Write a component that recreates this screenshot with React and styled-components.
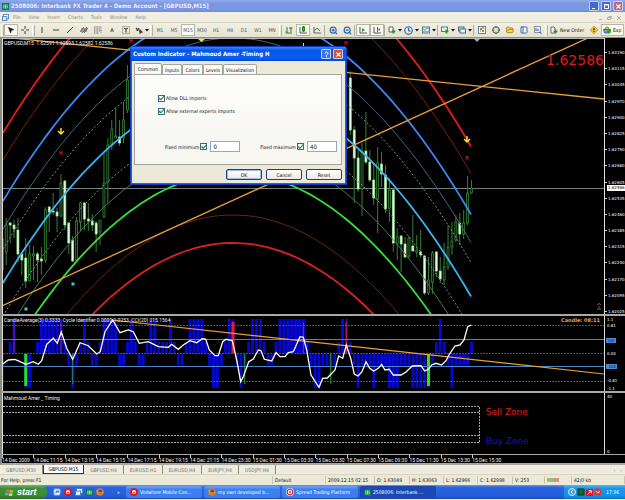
import React from "react";
import styled, { createGlobalStyle, css } from "styled-components";
import {
  ZoomIn, ZoomOut, Clock, Crosshair, MousePointer2, FolderOpen, PanelLeft,
} from "lucide-react";

const GlobalStyle = createGlobalStyle`
  * { box-sizing: border-box; }
  body { margin: 0; background: #ece9d8; font: 5px/6px "DejaVu Sans Condensed", "Liberation Sans", sans-serif; color: #111; }
  button, input { font: inherit; color: inherit; margin: 0; padding: 0; }
  svg { display: block; flex: none; }
`;

const Page = styled.div`
  display: flex;
  flex-direction: column;
  overflow: hidden;
  position: relative;
`;

/* ---------- window chrome ---------- */
const TitleBar = styled.header`
  display: flex;
  align-items: center;
  gap: 2px;
  height: 12px;
  padding: 0 2px;
  background: linear-gradient(#93abee, #7b96e0 30%, #7b97e2 80%, #6f8ad4);
  color: #e9effd;
`;
const TitleText = styled.h1`
  flex: 1;
  margin: 0;
  font-size: 6px;
  line-height: 12px;
  font-weight: bold;
  white-space: nowrap;
`;
const CaptionButton = styled.button`
  display: grid;
  place-items: center;
  width: 10px;
  height: 10px;
  border: 1px solid #c4d0f6;
  border-radius: 1px;
  background: ${(p) => (p.$close ? (p.$muted ? "#b96a80" : "#e0502c") : p.$muted ? "#4468d0" : "#3a74ee")};
  color: #fff;
`;
const MenuBar = styled.nav`
  display: flex;
  align-items: center;
  height: 11px;
  padding: 0 3px 0 2px;
  gap: 4px;
  background: #f0eee1;
  border-bottom: 1px solid #d6d2c2;
  color: #9a988c;
`;
const MenuList = styled.div`
  display: flex;
  flex: 1;
  gap: 8px;
`;
const MenuButton = styled.button`
  border: 0;
  background: none;
  color: #8a887c;
  line-height: 10px;
`;
const Toolbar = styled.div`
  display: flex;
  align-items: center;
  height: 15px;
  padding-left: 1px;
  overflow: hidden;
  background: linear-gradient(#f2f0e4, #e6e2d0);
  border-bottom: 1px solid #8e8c80;
`;
const Grip = styled.div`
  flex: none;
  width: 3px;
  height: 11px;
  border-left: 1px solid #fff;
  border-right: 1px solid #b4b09c;
`;
const Divider = styled.div`
  flex: none;
  width: 2px;
  height: 11px;
  border-left: 1px solid #b0ac9a;
`;
const Tool = styled.button`
  flex: none;
  display: flex;
  align-items: center;
  justify-content: center;
  gap: 2px;
  width: ${(p) => (p.$wide ? 17 : 14)}px;
  height: 12px;
  border: 1px solid ${(p) => (p.$pressed ? "#b9b5a4" : "transparent")};
  background: ${(p) => (p.$pressed ? "#faf9f4" : "none")};
  color: #55544e;
`;
const LabelTool = styled(Tool)`
  width: auto;
  padding: 0 2px 0 1px;
  color: #111;
  white-space: nowrap;
`;

/* ---------- charts ---------- */
const ChartWindow = styled.main`
  display: flex;
  flex-direction: column;
  background: #000;
  border-left: 2px solid #8b8a80;
  border-bottom: 2px solid #a8a69c;
  color: #f0f0f0;
`;
const Pane = styled.section`
  display: flex;
  height: ${(p) => p.$height}px;
  border-bottom: ${(p) => (p.$last ? 1 : 2)}px solid #a9a9a6;
`;
const Plot = styled.div`
  position: relative;
  flex: 1;
  min-width: 0;
  border-left: 1px solid #ddd;
  border-right: 1px solid #ddd;
  ${(p) => p.$top && css`border-top: 1px solid #bbb;`}
`;
const Drawing = styled.svg`
  width: 100%;
  height: 100%;
`;
const PaneLabel = styled.div`
  position: absolute;
  left: 1px;
  top: ${(p) => p.$top || 1}px;
  font-family: Roboto, sans-serif;
  white-space: pre;
`;
const BigPrice = styled.div`
  position: absolute;
  right: 0;
  top: 13px;
  font: 14px/16px "DejaVu Sans", sans-serif;
  color: #e01818;
`;
const CandleTimer = styled.div`
  position: absolute;
  right: 4px;
  top: 1px;
  font: bold 5px/7px "DejaVu Sans", sans-serif;
  color: #f0a040;
`;
const Zone = styled.div`
  position: absolute;
  left: 80%;
  top: ${(p) => p.$top}px;
  padding-left: 2px;
  font: 9px/10px "DejaVu Sans", sans-serif;
  color: ${(p) => p.$color};
`;
const Scale = styled.div`
  position: relative;
  display: flex;
  flex-direction: column;
  justify-content: ${(p) => (p.$spread ? "space-between" : "flex-start")};
  width: 20px;
  padding: ${(p) => p.$pad || "0"};
  font: 4px/5px "DejaVu Sans", sans-serif;
  color: #fff;
`;
const PriceTick = styled.span`
  padding-left: 3px;
  position: relative;
  &::before {
    content: "";
    position: absolute;
    left: 0;
    top: 2px;
    width: 2px;
    height: 1px;
    background: #ccc;
  }
`;
const LastPrice = styled.span`
  position: absolute;
  right: 0;
  top: 147px;
  width: 18px;
  padding-left: 1px;
  background: #fff;
  color: #000;
  line-height: 6px;
`;
const LevelTick = styled.span`
  align-self: flex-start;
  margin-top: ${(p) => p.$gap || 0}px;
  margin-left: 1px;
  padding: 0 1px;
  background: ${(p) => (p.$mark ? "#4a8ad4" : "none")};
  color: ${(p) => (p.$mark ? "#0a1a50" : "#fff")};
`;
const TimeAxis = styled.div`
  display: flex;
  height: 8px;
  margin-right: 20px;
`;
const TimeTick = styled.span`
  flex: none;
  width: 5.2%;
  padding-top: 2px;
  font-family: Roboto, sans-serif;
  line-height: 6px;
  white-space: nowrap;
  background: linear-gradient(#ccc, #ccc) no-repeat 0 0 / 1px 3px;
`;

/* ---------- dialog ---------- */
const Dialog = styled.section`
  position: absolute;
  left: 130px;
  top: 46px;
  width: 217px;
  padding: 0 4px 4px 3px;
  background: #ece9d8;
  border: 1px solid #0a3cc8;
  box-shadow: inset 0 0 0 1px #2460ea;
  border-radius: 3px 3px 0 0;
`;
const DialogTitle = styled.div`
  display: flex;
  align-items: center;
  gap: 2px;
  height: 14px;
  margin: 0 -4px 2px -3px;
  padding: 0 3px 0 2px;
  border-radius: 2px 2px 0 0;
  background: linear-gradient(#3a86f8, #0656e4 25%, #0560f2 80%, #0444c4);
  color: #fff;
`;
const Tabs = styled.div`
  display: flex;
  align-items: flex-end;
  height: 11px;
`;
const Tab = styled.button`
  height: ${(p) => (p.$active ? 11 : 10)}px;
  width: ${(p) => p.$width}px;
  border: 1px solid #a3a79c;
  border-top-color: ${(p) => (p.$active ? "#e68b2c" : "#a3a79c")};
  border-bottom: 0;
  border-radius: 2px 2px 0 0;
  background: #fbfaf6;
  line-height: 8px;
  white-space: nowrap;
`;
const TabPanel = styled.div`
  display: flex;
  flex-direction: column;
  height: 91px;
  padding: 19px 4px 0 23px;
  border: 1px solid #a3a79c;
  background: linear-gradient(#fdfdfb, #f6f5ef);
`;
const CheckRow = styled.label`
  display: flex;
  align-items: center;
  gap: 1px;
  height: 8px;
  margin-bottom: 5px;
`;
const Check = styled.input.attrs({ type: "checkbox" })`
  appearance: none;
  display: grid;
  place-items: center;
  flex: none;
  width: 7px;
  height: 7px;
  border: 1px solid #3c6a8a;
  background: #fff;
  &:checked::before {
    content: "";
    width: 5px;
    height: 5px;
    background: #1f9a28;
    clip-path: polygon(0 40%, 40% 65%, 100% 0, 100% 35%, 40% 100%, 0 75%);
  }
`;
const LimitRow = styled.div`
  display: flex;
  justify-content: space-between;
  margin-top: 21px;
  padding-left: 7px;
`;
const Limit = styled.div`
  display: flex;
  align-items: center;
  gap: 3px;
`;
const LimitLabel = styled.label`
  display: flex;
  align-items: center;
  gap: 1px;
`;
const TextBox = styled.input`
  width: 30px;
  height: 11px;
  padding-left: 2px;
  border: 1px solid #8fabc6;
  background: #fff;
  font-size: 6px;
`;
const DialogButtons = styled.div`
  display: flex;
  justify-content: flex-end;
  gap: 4px;
  padding: 4px 0 0;
`;
const PushButton = styled.button`
  width: 36px;
  height: 11px;
  border: 1px solid #1c4078;
  border-radius: 2px;
  background: linear-gradient(#fff, #ece9e0);
  line-height: 8px;
  ${(p) => p.$primary && css`box-shadow: inset 0 0 0 1px #9dbcf0;`}
`;

/* ---------- bottom bars ---------- */
const SheetTabs = styled.nav`
  display: flex;
  height: 9px;
  background: #efecdf;
`;
const SheetTab = styled.button`
  width: ${(p) => p.$width}px;
  border: 0;
  border-right: 1px solid #8a887c;
  background: ${(p) => (p.$active ? "#fff" : "none")};
  color: ${(p) => (p.$active ? "#000" : "#77756b")};
  line-height: 8px;
  ${(p) => p.$active && css`border: 1px solid #333; border-top: 0;`}
`;
const Scrollers = styled.div`
  display: flex;
  align-items: center;
  gap: 5px;
  margin-left: auto;
  padding-right: 3px;
  color: #777;
`;
const StatusBar = styled.footer`
  display: flex;
  align-items: center;
  height: 11px;
  background: #ece9d8;
  border-top: 1px solid #d8d4c4;
`;
const StatusCell = styled.span`
  ${(p) => (p.$width ? css`flex: none; width: ${p.$width}px;` : css`flex: 1;`)}
  height: 8px;
  padding-left: ${(p) => p.$inset || 2}px;
  line-height: 8px;
  border-right: 1px solid #c8c4b2;
  white-space: nowrap;
`;
const TaskBar = styled.div`
  display: flex;
  align-items: stretch;
  height: 14px;
  background: linear-gradient(#5a96f4, #2b64de 18%, #245cdc 80%, #1c48b0);
  color: #fff;
`;
const StartButton = styled.button`
  display: flex;
  align-items: center;
  gap: 3px;
  width: 47px;
  padding-left: 5px;
  border: 0;
  border-radius: 0 6px 6px 0;
  background: linear-gradient(#6cb468, #3a9038 25%, #388c34 75%, #2a6c2a);
  color: #fff;
  font: italic bold 9px/12px "Liberation Sans", sans-serif;
`;
const QuickLaunch = styled.div`
  display: flex;
  align-items: center;
  gap: 3px;
  width: 79px;
  padding-left: 6px;
`;
const Overflow = styled.span`
  padding-left: 10px;
`;
const TaskButton = styled.button`
  display: flex;
  align-items: center;
  gap: 2px;
  width: 76px;
  margin: 1px 2px 1px 0;
  padding-left: 4px;
  border: 0;
  border-radius: 2px;
  background: ${(p) => (p.$active ? "#1c48b4" : "linear-gradient(#6aa4fa, #3c80f0 30%, #3a7cec)")};
  color: #fff;
  white-space: nowrap;
`;
const Tray = styled.div`
  display: flex;
  align-items: center;
  gap: 1px;
  margin-left: auto;
  padding: 0 6px 0 4px;
  background: linear-gradient(#4cb8f6, #1896ec 25%, #1490e8 80%, #1070c0);
`;
const ClockText = styled.time`
  padding-left: 3px;
`;

/* ---------- small drawings ---------- */
const Ic = ({ children, size = 8 }) => (
  <svg width={size} height={size} viewBox="0 0 8 8" fill="none" stroke="#44433e" strokeWidth="1">{children}</svg>
);
const Caret = () => (
  <svg width="4" height="3" viewBox="0 0 4 3"><path d="M0 0h4L2 2.5z" fill="#111" /></svg>
);
const Plus = () => <path d="M5.5 3.5v4M3.5 5.5h4" stroke="#18a818" strokeWidth="1.7" />;
const icons = {
  vline: <path d="M4 1v6" />,
  hline: <path d="M1 4h6" />,
  diag: <path d="M1 7l6-6" />,
  channel: <path d="M0 6l4-5M2 7l5-6M4 7l4-5M1 3h6M1 5h6" strokeWidth=".8" />,
  fib: <path d="M0 1h8M0 3h8M0 5h6M0 7h5M7 4v3" strokeDasharray="1 .6" strokeWidth=".8" />,
  arrows: <path d="M1 2l2 2 1-2M2 3v2M4 5l3 1M5 4v3l2-1z" strokeWidth="1.2" />,
  bars: <path d="M2 1v6M2 6H.5M6 1v5M6 2h1.5M4 2H6M1 7h6" stroke="#3a7a3a" />,
  candles: <><path d="M1 1v6h7" stroke="#555" /><path d="M4.5 0v6" stroke="#189018" /><rect x="3.5" y="1" width="2" height="4" fill="#24c024" stroke="#189018" /></>,
  line: <><path d="M1 1v6h7" stroke="#666" /><path d="M1 5l3-3 3 3" stroke="#2a8a2a" /></>,
  scroll: <><path d="M1 1v6h7" stroke="#555" /><path d="M3 2v4l3-2z" fill="#28a028" stroke="none" /></>,
  shift: <><path d="M1 1v6h7M4.5 1v5" stroke="#555" /><path d="M7 2v3L5 3.5z" fill="#b04848" stroke="none" /></>,
  indicator: <><path d="M1 1h4v5H1z" fill="#fff" stroke="#666" /><Plus /></>,
  template: <><rect x=".5" y="1" width="7" height="6" fill="#d8ecf8" stroke="#587890" /><path d="M1 3l2 1 2-2 2 1M1 6l2-1 2 1 2-1" stroke="#4a8a6a" strokeWidth=".7" /></>,
  newChart: <><rect x=".5" y="1" width="6" height="4.5" fill="#e8f4fc" stroke="#587890" /><Plus /></>,
  profiles: <><rect x=".5" y="1" width="5.5" height="4" fill="#cfe2f6" stroke="#486890" /><rect x="2" y="3" width="5.5" height="4" fill="#eef6ff" stroke="#486890" /></>,
  watch: <><rect x=".5" y=".5" width="7" height="7" fill="#fff" stroke="#68809a" /><path d="M2 3h2M4 5h2" stroke="#d03030" strokeWidth="1.3" /><path d="M4 2h2M2 5h1" stroke="#28a028" /></>,
  tester: <><rect x=".5" y=".5" width="6" height="6" fill="#e4eefa" stroke="#8898a8" /><path d="M2 5V2M4 5V3M5 6l2.5 1.5" stroke="#2a60b8" /></>,
  order: <><path d="M1 1h3l1 1v5H1z" fill="#fff" stroke="#666" /><Plus /></>,
  alert: <><path d="M4 0l4 4-4 4-4-4z" fill="#f4c430" stroke="#a88010" strokeWidth=".5" /><path d="M4 2v2.5M4 5.2v.8" stroke="#111" /></>,
  expert: <><path d="M.5 3.500h7l-1 3.500h-5z" fill="#58a8d8" stroke="#386890" /><path d="M2 3a2 2 0 014 0" fill="#f4d050" stroke="#a08020" /><circle cx="6" cy="5.500" r="2" fill="#22b022" stroke="none" /></>,
  app: <><rect x="1.500" y=".5" width="6" height="5" fill="#fff" stroke="#4480c8" /><rect x=".5" y="3" width="5" height="4.500" fill="#d8ecff" stroke="#4480c8" /></>,
  green: <><rect x=".5" y=".5" width="7" height="7" fill="#2fa070" stroke="#157050" /><path d="M2 5V3M4 6V2M6 5V3" stroke="#a0f0c0" /></>,
  vodafone: <><circle cx="4" cy="4" r="4" fill="#e01818" stroke="none" /><circle cx="4" cy="4" r="2" fill="#fff" stroke="none" /><circle cx="4" cy="4.500" r=".9" fill="#e01818" stroke="none" /></>,
  fox: <><circle cx="4" cy="4" r="3.800" fill="#e87818" stroke="none" /><circle cx="4.300" cy="3.400" r="2" fill="#3058b0" stroke="none" /><path d="M1 2c0 3 3 4 6 2" stroke="#f8a830" /></>,
  page: <><rect x="1" y="1" width="6" height="6" rx="1" fill="#eaf4ff" stroke="#90b8e8" /><path d="M3 5a1.500 1.500 0 113-1H3" stroke="#2870c0" /></>,
  target: <><circle cx="4" cy="4" r="3.900" fill="#fff" stroke="none" /><circle cx="4" cy="4" r="2.800" stroke="#d01830" strokeWidth="1.200" /><circle cx="4" cy="4" r="1" fill="#d01830" stroke="none" /></>,
  chev: <><circle cx="4" cy="4" r="3.500" fill="#3a98f0" stroke="#d8ecff" /><path d="M5 2L3 4l2 2" stroke="#fff" /></>,
  net: <rect x="1" y="1" width="6" height="6" fill="#107028" stroke="#083818" />,
  redBox: <><rect x="0" y="0" width="8" height="8" fill="#d81828" stroke="none" /><path d="M2 6l4-4M3 2h3v3" stroke="#fff" /></>,
  redBall: <><circle cx="4" cy="4" r="3.800" fill="#e03838" stroke="none" /><path d="M2 3l2 2 2-2" stroke="#fff" /></>,
};
const Glyph = ({ n, size }) => <Ic size={size}>{icons[n]}</Ic>;
const WindowsFlag = () => (
  <svg width="9" height="9" viewBox="0 0 9 9">
    <path d="M1 1.5q2-1 3.400 0L3.800 4Q2 3.200.4 4z" fill="#f06038" />
    <path d="M5 1.800q1.600 1 3.600 0L8 4.300q-2 1-3.600 0z" fill="#80d040" />
    <path d="M.2 4.800q2-.8 3.400 0L3 7.500q-1.600-.9-3.400 0z" fill="#60a0f8" />
    <path d="M4.200 5q1.600 1 3.600 0L7.200 7.600q-2 1-3.600 0z" fill="#f8d038" />
  </svg>
);
const CapIcon = ({ kind }) => (
  <svg width="7" height="7" viewBox="0 0 7 7" fill="none" stroke="#fff">
    {kind === "min" && <path d="M1 5.500h3" />}
    {kind === "max" && <path d="M1.500 1.500h4v4h-4zM1 2h5" />}
    {kind === "close" && <path d="M1.500 1.500l4 4M5.500 1.500l-4 4" strokeWidth="1.200" />}
    {kind === "help" && <path d="M2 2.500C2 .5 5 .5 5 2.300 5 3.500 3.500 3.200 3.500 4.700M3.500 5.300v1" />}
  </svg>
);

/* ---------- data ---------- */
const barX = (k) => 2.3 + 3.91 * k;

// index, high, low, body top, body bottom, falling
const candles = [
  [0,238,271,239,270,0],[1,218,265,225,252,0],[2,222,243,223,225,1],[3,220,238,225,229,1],[4,218,262,230,254,1],
  [5,252,275,254,260,1],[6,238,288,258,281,1],[7,245,281,254,281,0],[8,246,280,254,256,0],[9,252,282,254,260,1],
  [10,247,275,259,261,1],[11,207,263,210,260,0],[12,206,232,207,212,1],[13,193,215,211,212,1],[14,208,232,212,216,1],
  [15,174,217,183,216,0],[16,180,230,181,225,1],[17,222,254,223,243,1],[18,236,262,240,261,1],[19,217,263,221,260,0],
  [20,202,231,203,222,0],[21,202,230,203,219,1],[22,203,231,219,221,1],[23,214,231,221,225,1],[24,221,252,223,234,1],
  [25,220,245,220,232,0],[26,152,218,183,217,0],[27,138,203,145,182,0],[28,120,150,129,144,0],[29,108,138,136,138,0],
  [30,120,146,137,143,1],[31,102,143,120,138,0],[32,65,113,80,110,0],
  [89,71,135,78,130,1],[90,126,203,130,158,1],[91,150,192,158,189,1],[92,143,216,152,189,0],[93,112,164,151,162,1],
  [94,150,182,162,180,1],[95,163,205,180,198,1],[96,147,233,163,199,0],[97,152,187,164,174,1],[98,165,213,175,209,1],
  [99,178,222,190,208,0],[100,188,252,190,243,1],[101,228,260,237,244,0],[102,235,272,236,244,1],[103,237,258,244,257,1],
  [104,236,258,238,256,0],[105,215,251,246,251,1],[106,235,257,250,252,0],[107,230,258,252,255,1],[108,255,295,256,293,1],
  [109,257,295,280,293,0],[110,251,294,253,282,0],[111,251,277,252,271,1],[112,257,283,271,279,1],[113,243,285,267,280,0],
  [114,225,270,247,267,0],[115,222,255,241,247,0],[116,215,242,222,240,0],[117,213,245,223,234,1],[118,210,239,223,234,0],
  [119,176,225,193,223,0],[120,180,194,188,193,0],
];

// apex height, colour, thickness, dash
const arcs = [
  [-58, "#e81c1c", 1.8], [-31, "#7c1c18", 1], [10, "#3a88f0", 1.8], [38, "#3c6a78", 1],
  [58, "#6a9a90", 1, "2 2"], [92, "#3cb4f0", 1.8], [125, "#6a9a88", 1, "2 2"], [147, "#3c7a58", 1],
  [173, "#38dc38", 1.8], [215, "#6c2020", 1], [243, "#e02020", 1.8],
];
const arcPath = (top) => {
  const pts = [];
  for (let x = 3; x <= 471; x += 6) pts.push(`${x},${(top + 0.00361 * (x - 233) ** 2).toFixed(1)}`);
  return pts.join(" ");
};

// U/D long bar above/below zero, u/d short bar, dot for none; ten bars a group
const cycle = [
  "D.uU..DD.u", "UUUUUUudDd", "uUudduUUUU", "dduUudduUU", "uuuUudduUU",
  "UUudDDduUU", "dDduUUUudd", "uUUUUUUUud", "DDdddduUUu", "dDdddDdddD",
  "DDdddDDDDD", "duUudDdddd", "u",
].join("");
const barLevels = { U: [319, 34], u: [342, 11], d: [354, 11], D: [354, 34] };
// bar index, top, height, width, colour
const accents = [
  [6, 354, 32, 3, "#20e820"], [59, 322, 31, 3, "#f01818"], [109, 354, 32, 3, "#20e820"],
  [3, 322, 31, 1, "#8a2080"], [15, 322, 31, 1, "#8a2080"], [18, 354, 30, 1, "#208870"],
  [62, 354, 30, 1, "#20a028"], [77, 322, 31, 1, "#c01860"], [84, 354, 30, 1, "#20a028"], [88, 322, 31, 1, "#c01860"],
];

const oscillator = [
  [7,163],[25,150],[45,148],[60,155],[78,163],[100,155],[115,163],[125,152],[140,103],[160,85],[172,100],[184,66],[200,115],
  [218,148],[240,98],[265,107],[290,132],[301,125],[315,65],[338,30],[360,68],[385,60],[400,65],[418,100],[445,95],[475,110],
  [505,112],[515,103],[535,118],[550,105],[570,92],[590,98],[607,86],[617,87],[628,120],[645,137],[655,137],[668,95],[678,88],
  [697,92],[710,150],[722,215],[730,200],[746,155],[760,147],[775,120],[783,122],[793,148],[815,153],[828,128],[840,140],
  [855,140],[865,128],[880,125],[900,80],[910,82],[920,120],[933,195],[957,232],[968,205],[982,204],[1005,180],[1016,138],
  [1028,145],[1039,105],[1052,145],[1063,192],[1074,198],[1086,185],[1098,155],[1109,175],[1121,183],[1135,175],[1145,163],
  [1155,180],[1168,178],[1180,195],[1203,195],[1217,187],[1237,168],[1263,167],[1274,183],[1285,178],[1295,165],[1308,160],
  [1325,165],[1338,152],[1350,130],[1365,108],[1380,105],[1392,90],[1403,50],[1414,45],
].map(([x, y]) => `${(x / 3).toFixed(1)},${(310 + y / 3).toFixed(1)}`).join(" ");

const prices = ["1.63190","1.63115","1.63045","1.62970","1.62900","1.62825","1.62750","1.62680","1.62605","1.62535","1.62460","1.62385","1.62315","1.62240","1.62170","1.62095","1.62025"];
const levels = [["1.1", 0], ["0.81", 1], ["100", 10, true], ["0.00", 8], ["-100", 8, true], ["-0.81", 9], ["-1.1", 3]];
const times = ["14 Dec 2009","14 Dec 11:15","14 Dec 13:15","14 Dec 15:15","14 Dec 17:15","14 Dec 19:15","14 Dec 21:15","14 Dec 23:30","15 Dec 01:30","15 Dec 03:30","15 Dec 05:30","15 Dec 07:30","15 Dec 09:30","15 Dec 11:30","15 Dec 13:30","15 Dec 15:30"];

const DownArrow = ({ x, y }) => (
  <path d={`M${x} ${y - 3}v5M${x - 3} ${y}l3 3 3-3`} stroke="#f8e828" strokeWidth="1.400" fill="none" />
);
const Cross = ({ x, y }) => (
  <path d={`M${x - 1.5} ${y - 1.5}l3 3m0-3l-3 3`} stroke="#e01818" strokeWidth="1.200" />
);

function PriceChart() {
  return (
    <Drawing viewBox="3 39 601 275" preserveAspectRatio="none">
      <path d="M3 188.500H604" stroke="#72807e" />
      {candles.map(([k, hi, lo, a, b, down]) => (
        <g key={k}>
          <path d={`M${barX(k)} ${hi}V${lo}`} stroke="#388038" />
          <rect x={barX(k) - 1} y={a} width="2" height={Math.max(b - a, 1)}
            fill={down ? "#e4ffe0" : "#041804"} stroke={down ? "#a0dc98" : "#3c903c"} strokeWidth=".7" />
        </g>
      ))}
      {arcs.map(([top, color, w, dash]) => (
        <polyline key={top} points={arcPath(top)} fill="none" stroke={color} strokeWidth={w} strokeDasharray={dash} />
      ))}
      <path d="M3 305.500L588 38" stroke="#e8a03c" strokeWidth="1.300" />
      <path d="M12 38L604 99" stroke="#e8a03c" strokeWidth="1.300" />
      <DownArrow x={61} y={131} /><DownArrow x={467} y={139} />
      <Cross x={61} y={153} /><Cross x={467} y={158} /><Cross x={131} y={41} /><Cross x={346} y={43} />
      <rect x="24.500" y="307.500" width="3" height="3" fill="#38c8d8" />
      <rect x="71.500" y="282.500" width="3" height="3" fill="#38c8d8" />
      <path d="M198 39h7l-3.500 3z" fill="#f8e828" />
      <path d="M303.500 43v3" stroke="#f8e828" />
      <path d="M474 39h6l-3 3z" fill="#a0a8c0" />
      <path d="M597 305l2-1.500 2 1.500M597 309h4M598 307h2" stroke="#888" strokeWidth=".8" fill="none" />
    </Drawing>
  );
}

function CycleChart() {
  return (
    <Drawing viewBox="3 316 601 75" preserveAspectRatio="none">
      {[...cycle].map((c, k) => {
        const lv = barLevels[c];
        return lv ? <rect key={k} x={barX(k) - 1.4} y={lv[0]} width="2.900" height={lv[1]} fill="#0606d2" /> : null;
      })}
      <path d="M3 325.500H604M3 353.500H604M3 381.500H604" stroke="#a02c2c" strokeDasharray="2 1" />
      {accents.map(([k, y, h, w, color]) => (
        <rect key={k} x={barX(k) - w / 2} y={y} width={w} height={h} fill={color} />
      ))}
      <path d="M3 339.500H604M3 366.500H604" stroke="#4a84c4" />
      <path d="M112 320L604 374" stroke="#e8a03c" strokeWidth="1.200" />
      <polyline points={oscillator} fill="none" stroke="#fff" strokeWidth="1.300" />
    </Drawing>
  );
}

function TimingChart() {
  return (
    <Drawing viewBox="3 393 601 61" preserveAspectRatio="none">
      <path d="M3 406.500H479.500V442.500H3M3 412.500H479M3 435.500H479" fill="none" stroke="#a8a8a8" strokeDasharray="2 1" />
    </Drawing>
  );
}

function IndicatorDialog() {
  return (
    <Dialog role="dialog" aria-labelledby="dialog-title">
      <DialogTitle>
        <TitleText as="h2" id="dialog-title">Custom Indicator - Mahmoud Amer -Timing H</TitleText>
        <CaptionButton aria-label="Help"><CapIcon kind="help" /></CaptionButton>
        <CaptionButton $close aria-label="Close"><CapIcon kind="close" /></CaptionButton>
      </DialogTitle>
      <Tabs role="tablist">
        <Tab role="tab" aria-selected="true" $active $width={28}>Common</Tab>
        <Tab role="tab" $width={20}>Inputs</Tab>
        <Tab role="tab" $width={21}>Colors</Tab>
        <Tab role="tab" $width={20}>Levels</Tab>
        <Tab role="tab" $width={34}>Visualization</Tab>
      </Tabs>
      <TabPanel>
        <CheckRow><Check defaultChecked />Allow DLL imports</CheckRow>
        <CheckRow><Check defaultChecked />Allow external experts imports</CheckRow>
        <LimitRow>
          <Limit>
            <LimitLabel>Fixed minimum<Check defaultChecked /></LimitLabel>
            <TextBox aria-label="Fixed minimum value" defaultValue="0" />
          </Limit>
          <Limit>
            <LimitLabel>Fixed maximum<Check defaultChecked /></LimitLabel>
            <TextBox aria-label="Fixed maximum value" defaultValue="40" />
          </Limit>
        </LimitRow>
      </TabPanel>
      <DialogButtons>
        <PushButton $primary>OK</PushButton>
        <PushButton>Cancel</PushButton>
        <PushButton>Reset</PushButton>
      </DialogButtons>
    </Dialog>
  );
}

const IconTool = ({ n, label, wide, pressed }) => (
  <Tool aria-label={label} $wide={wide} $pressed={pressed}><Glyph n={n} />{wide && <Caret />}</Tool>
);

function MainToolbar() {
  return (
    <Toolbar role="toolbar">
      <Grip />
      <Tool $pressed aria-label="Cursor"><MousePointer2 size={8} fill="#111" /></Tool>
      <Tool aria-label="Crosshair"><Ic><path d="M4 0v3M4 5v3M0 4h3M5 4h3" /></Ic></Tool>
      <Grip />
      <IconTool n="vline" label="Vertical line" />
      <IconTool n="hline" label="Horizontal line" />
      <IconTool n="diag" label="Trendline" />
      <IconTool n="channel" label="Channel" />
      <IconTool n="fib" label="Fibonacci" />
      <Tool><b>A</b></Tool>
      <Tool aria-label="Text label"><Ic><path d="M.5.500h7v7h-7z" strokeDasharray="1 1" strokeWidth=".7" /><path d="M2 2.500h4M4 2.500V6.500" strokeWidth="1.200" /></Ic></Tool>
      <IconTool n="arrows" label="Arrows" wide />
      <Grip />
      {["M1", "M5", "M15", "M30", "H1", "H4", "D1", "W1", "MN"].map((t) => (
        <Tool key={t} $pressed={t === "M15"}>{t}</Tool>
      ))}
      <Grip />
      <IconTool n="bars" label="Bar chart" />
      <IconTool n="candles" label="Candlesticks" pressed />
      <IconTool n="line" label="Line chart" />
      <Divider />
      <Tool aria-label="Zoom in"><ZoomIn size={9} color="#2a68b0" strokeWidth={3} /></Tool>
      <Tool aria-label="Zoom out"><ZoomOut size={9} color="#2a68b0" strokeWidth={3} /></Tool>
      <Divider />
      <IconTool n="scroll" label="Auto scroll" pressed />
      <IconTool n="shift" label="Chart shift" pressed />
      <Divider />
      <IconTool n="indicator" label="Indicators" wide />
      <Tool $wide aria-label="Periods"><Clock size={9} color="#1c60b0" strokeWidth={3} /><Caret /></Tool>
      <IconTool n="template" label="Templates" wide />
      <Divider />
      <IconTool n="newChart" label="New chart" wide />
      <IconTool n="profiles" label="Profiles" wide />
      <Divider />
      <IconTool n="watch" label="Market watch" />
      <Tool aria-label="Data window"><Crosshair size={8} strokeWidth={3} /></Tool>
      <Tool aria-label="Navigator"><FolderOpen size={8} color="#b08818" fill="#f8d858" strokeWidth={3} /></Tool>
      <Tool aria-label="Terminal"><PanelLeft size={8} color="#3868b0" fill="#fff" strokeWidth={3} /></Tool>
      <IconTool n="tester" label="Strategy tester" />
      <Grip />
      <LabelTool><Glyph n="order" />New Order</LabelTool>
      <IconTool n="alert" label="Alert" />
      <LabelTool $pressed><Glyph n="expert" />Exp</LabelTool>
    </Toolbar>
  );
}

export default function App() {
  return (
    <Page>
      <GlobalStyle />
      <TitleBar>
        <Glyph n="green" size={7} />
        <TitleText>2508006: Interbank FX Trader 4 - Demo Account - [GBPUSD,M15]</TitleText>
        <CaptionButton $muted aria-label="Minimize"><CapIcon kind="min" /></CaptionButton>
        <CaptionButton $muted aria-label="Maximize"><CapIcon kind="max" /></CaptionButton>
        <CaptionButton $muted $close aria-label="Close"><CapIcon kind="close" /></CaptionButton>
      </TitleBar>
      <MenuBar>
        <Glyph n="app" size={7} />
        <MenuList>
          {["File", "View", "Insert", "Charts", "Tools", "Window", "Help"].map((m) => <MenuButton key={m}>{m}</MenuButton>)}
        </MenuList>
        <svg width="24" height="5" viewBox="0 0 24 5" fill="none" stroke="#b4b2a8">
          <path d="M1 4.500h3M10.500 1.500h3v2M9.500 2.500h3v2h-3zM19 1l4 4M23 1l-4 4" />
        </svg>
      </MenuBar>
      <MainToolbar />

      <ChartWindow>
        <Pane $height={278}>
          <Plot $top>
            <PriceChart />
            <PaneLabel>GBPUSD,M15  1.62591 1.62593 1.62582 1.62586</PaneLabel>
            <BigPrice>1.62586</BigPrice>
          </Plot>
          <Scale $spread $pad="12px 0 0">
            {prices.map((p) => <PriceTick key={p}>{p}</PriceTick>)}
            <LastPrice>1.62586</LastPrice>
          </Scale>
        </Pane>
        <Pane $height={77}>
          <Plot>
            <CycleChart />
            <PaneLabel>CandleAverage(3) 0.3333  Cycle Identifier 0.0000 1.0253  CCI(20) 215.1564</PaneLabel>
            <CandleTimer>Candle: 08:11</CandleTimer>
          </Plot>
          <Scale $pad="1px 0 0">
            {levels.map(([v, gap, mark]) => <LevelTick key={v} $gap={gap} $mark={mark}>{v}</LevelTick>)}
          </Scale>
        </Pane>
        <Pane $height={62} $last>
          <Plot>
            <TimingChart />
            <PaneLabel $top={2}>Mahmoud Amer _ Timing</PaneLabel>
            <Zone $top={14} $color="#e01c1c">Sell Zone</Zone>
            <Zone $top={43} $color="#1010d8">Buy Zone</Zone>
          </Plot>
          <Scale $spread $pad="1px 0 0">
            <LevelTick>40</LevelTick>
            <LevelTick>0</LevelTick>
          </Scale>
        </Pane>
        <TimeAxis>{times.map((t) => <TimeTick key={t}>{t}</TimeTick>)}</TimeAxis>
      </ChartWindow>

      <SheetTabs>
        <SheetTab $width={43}>GBPUSD,M30</SheetTab>
        <SheetTab $width={41} $active>GBPUSD,M15</SheetTab>
        <SheetTab $width={40}>GBPUSD,H4</SheetTab>
        <SheetTab $width={39}>EURUSD,H1</SheetTab>
        <SheetTab $width={39}>EURUSD,H4</SheetTab>
        <SheetTab $width={37}>EURJPY,H4</SheetTab>
        <SheetTab $width={37}>USDJPY,H4</SheetTab>
        <Scrollers><span>‹</span><span>›</span></Scrollers>
      </SheetTabs>
      <StatusBar>
        <StatusCell $inset={1}>For Help, press F1</StatusCell>
        <StatusCell $width={53}>Default</StatusCell>
        <StatusCell $width={49}>2009.12.15 02:15</StatusCell>
        <StatusCell $width={35}>O: 1.63049</StatusCell>
        <StatusCell $width={34}>H: 1.63063</StatusCell>
        <StatusCell $width={34}>L: 1.62966</StatusCell>
        <StatusCell $width={35}>C: 1.62998</StatusCell>
        <StatusCell $width={32}>V: 253</StatusCell>
        <StatusCell $width={27}>
          <svg width="12" height="7" viewBox="0 0 12 7"><path d="M1 2v4M3 2v4M5 2v4" stroke="#489030" /><path d="M7 2v4M9 2v4M11 2v4" stroke="#b04828" /></svg>
        </StatusCell>
        <StatusCell $width={53}>42/0 kb</StatusCell>
      </StatusBar>
      <TaskBar>
        <StartButton><WindowsFlag />start</StartButton>
        <QuickLaunch>
          <Glyph n="page" /><Glyph n="vodafone" /><Glyph n="app" /><Glyph n="green" size={7} /><Glyph n="fox" />
          <Overflow>»</Overflow>
        </QuickLaunch>
        <TaskButton><Glyph n="vodafone" />Vodafone Mobile Con...</TaskButton>
        <TaskButton><Glyph n="fox" />my own developed b...</TaskButton>
        <TaskButton><Glyph n="target" />Spread Trading Platform</TaskButton>
        <TaskButton $active><Glyph n="green" size={7} />2508006: Interbank ...</TaskButton>
        <Tray>
          <Glyph n="chev" /><Glyph n="net" /><Glyph n="redBox" size={7} /><Glyph n="redBall" />
          <ClockText>17:36</ClockText>
        </Tray>
      </TaskBar>
      <IndicatorDialog />
    </Page>
  );
}
